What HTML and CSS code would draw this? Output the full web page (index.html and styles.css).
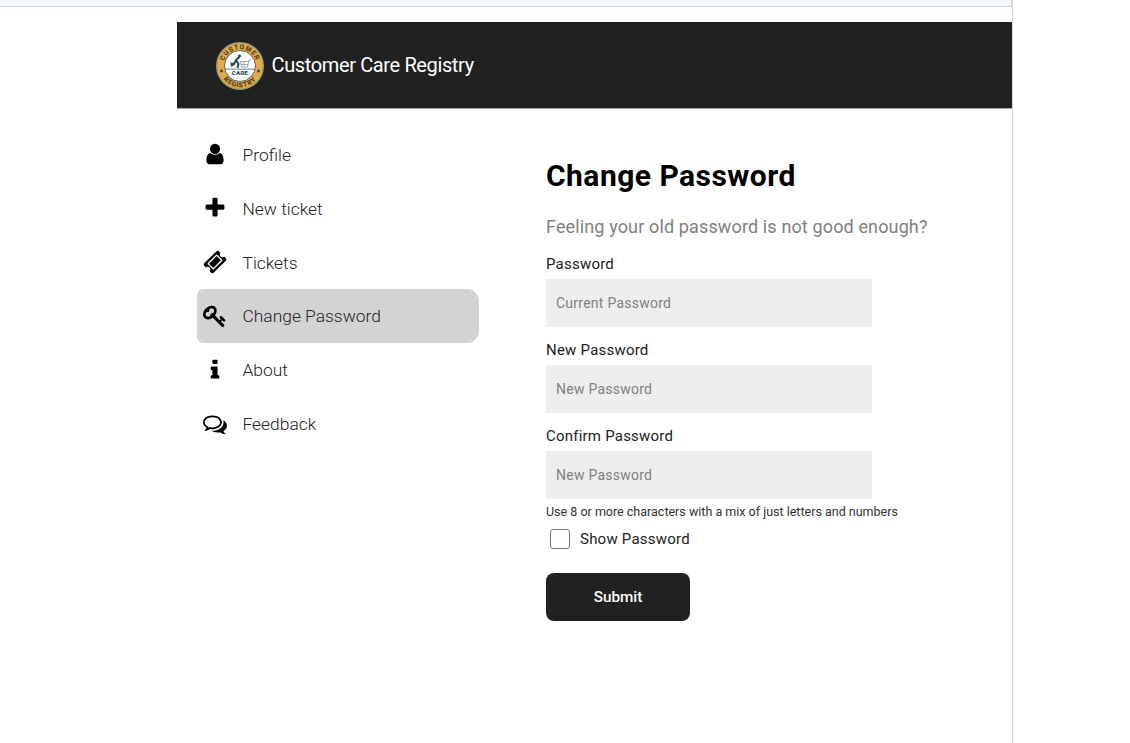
FILE: index.html
```html
<!DOCTYPE html>
<html lang="en">
<head>
<meta charset="utf-8">
<title>Customer Care Registry</title>
<link rel="stylesheet" href="styles.css">
</head>
<body>
<div class="frame">
  <div class="strip"></div>
  <div class="app">
    <header class="header">
      <svg class="logo" viewBox="0 0 48 48">
        <defs>
          <path id="arc-top" d="M7.300 24a16.700 16.700 0 0 1 33.400 0"/>
          <path id="arc-bottom" d="M2.700 24a21.300 21.300 0 0 0 42.600 0"/>
        </defs>
        <circle cx="24" cy="24" r="23.300" fill="#e5a948" stroke="#9c9c80" stroke-width="1.300"/>
        <circle cx="24" cy="24" r="15.500" fill="#fff" stroke="#566657" stroke-width="1"/>
        <text class="logo-ring"><textPath href="#arc-top" startOffset="50%" text-anchor="middle">CUSTOMER</textPath></text>
        <text class="logo-ring"><textPath href="#arc-bottom" startOffset="50%" text-anchor="middle">REGISTRY</textPath></text>
        <circle cx="5.500" cy="29" r="1.500" fill="#57431f"/>
        <circle cx="42.500" cy="29" r="1.500" fill="#57431f"/>
        <circle cx="23.500" cy="14" r="1.600" fill="#1f4d55"/>
        <path d="M23.500 15l-3.500 3-2 4-3 2M20 18l2.500 4-1 4M18.500 22l-4-.5" fill="none" stroke="#1f4d55" stroke-width="2"/>
        <path d="M35 18h-2l-1.500 7h-6l-1-5.500h8M25 22.500h7M28 20v5" fill="none" stroke="#8da0a5" stroke-width=".9"/>
        <path d="M9 27.200h30" stroke="#587278" stroke-width=".9"/>
        <text class="logo-care" x="24" y="33" text-anchor="middle">CARE</text>
        <path d="M17 36h14" stroke="#c5cccc" stroke-width="1" stroke-dasharray="2 1"/>
      </svg>
      <span class="brand">Customer Care Registry</span>
    </header>
    <div class="body">
      <nav class="menu">
        <a class="item"><svg class="icon" viewBox="0 0 1792 1792"><path d="M1536 1399q0 109-62.500 187t-150.500 78h-854q-88 0-150.500-78t-62.500-187q0-85 8.500-160.500t31.500-152 58.500-131 94-89 134.500-34.500q131 128 313 128t313-128q76 0 134.500 34.500t94 89 58.500 131 31.500 152 8.500 160.500zm-256-887q0 159-112.500 271.500t-271.500 112.500-271.500-112.500-112.500-271.500 112.500-271.500 271.500-112.500 271.500 112.500 112.500 271.500z"/></svg><span class="label">Profile</span></a>
        <a class="item"><svg class="icon" viewBox="0 0 1792 1792"><path d="M1600 736v192q0 40-28 68t-68 28h-416v416q0 40-28 68t-68 28h-192q-40 0-68-28t-28-68v-416h-416q-40 0-68-28t-28-68v-192q0-40 28-68t68-28h416v-416q0-40 28-68t68-28h192q40 0 68 28t28 68v416h416q40 0 68 28t28 68z"/></svg><span class="label">New ticket</span></a>
        <a class="item"><svg class="icon" viewBox="0 0 1792 1792"><path d="M1024 452l316 316-572 572-316-316zm-211 979l618-618q19-19 19-45t-19-45l-362-362q-18-18-45-18t-45 18l-618 618q-19 19-19 45t19 45l362 362q18 18 45 18t45-18zm889-637l-907 908q-37 37-90.500 37t-90.500-37l-126-126q56-56 56-136t-56-136-136-56-136 56l-125-126q-37-37-37-90.500t37-90.500l907-906q37-37 90.500-37t90.500 37l125 125q-56 56-56 136t56 136 136 56 136-56l126 125q37 37 37 90.500t-37 90.500z"/></svg><span class="label">Tickets</span></a>
        <a class="item active"><svg class="icon" viewBox="0 0 1792 1792"><path d="M832 512q0-80-56-136t-136-56-136 56-56 136q0 42 19 83-41-19-83-19-80 0-136 56t-56 136 56 136 136 56 136-56 56-136q0-42-19-83 41 19 83 19 80 0 136-56t56-136zm851 704q0 17-49 66t-66 49q-9 0-28.500-16t-36.500-33-38.500-40-24.500-26l-96 96 220 220q28 28 28 68 0 42-39 81t-81 39q-40 0-68-28l-671-671q-176 131-365 131-163 0-265.500-102.500t-102.500-265.500q0-160 95-313t248-248 313-95q163 0 265.500 102.500t102.500 265.500q0 189-131 365l355 355 96-96q-3-3-26-24.500t-40-38.500-33-36.500-16-28.500q0-17 49-66t66-49q13 0 23 10 6 6 46 44.500t82 79.500 86.500 86 73 78 28.500 41z"/></svg><span class="label">Change Password</span></a>
        <a class="item"><svg class="icon" viewBox="0 0 1792 1792"><path d="M1216 1344v128q0 26-19 45t-45 19h-512q-26 0-45-19t-19-45v-128q0-26 19-45t45-19h64v-384h-64q-26 0-45-19t-19-45v-128q0-26 19-45t45-19h384q26 0 45 19t19 45v576h64q26 0 45 19t19 45zm-128-1152v192q0 26-19 45t-45 19h-256q-26 0-45-19t-19-45v-192q0-26 19-45t45-19h256q26 0 45 19t19 45z"/></svg><span class="label">About</span></a>
        <a class="item"><svg class="icon" viewBox="0 0 1792 1792"><path d="M704 384q-153 0-286 52t-211.500 141-78.500 191q0 82 53 158t149 132l97 56-35 84q34-20 62-39l44-31 53 10q78 14 153 14 153 0 286-52t211.500-141 78.500-191-78.500-191-211.500-141-286-52zm0-128q191 0 353.500 68.500t256.500 186.500 94 257-94 257-256.500 186.500-353.500 68.500q-86 0-176-16-124 88-278 128-36 9-86 16h-3q-11 0-20.500-8t-11.500-21q-1-3-1-6.500t.5-6.500 2-6l2.500-5 3.500-5.500 4-5 4.500-5 4-4.500q5-6 23-25t26-29.500 22.500-29 25-38.500 20.500-44q-124-72-195-177t-71-224q0-139 94-257t256.500-186.500 353.500-68.500zm822 1169q10 24 20.500 44t25 38.500 22.500 29 26 29.500 23 25q1 1 4 4.500t4.500 5 4 5 3.500 5.500l2.500 5 2 6 .5 6.500-1 6.500q-3 14-13 22t-22 7q-50-7-86-16-154-40-278-128-90 16-176 16-271 0-472-132 58 4 88 4 161 0 309-45t264-129q125-92 192-212t67-254q0-77-23-152 129 71 204 178t75 230q0 120-71 224.500t-195 176.500z"/></svg><span class="label">Feedback</span></a>
      </nav>
      <form class="form">
        <h1 class="title">Change Password</h1>
        <p class="lead">Feeling your old password is not good enough?</p>
        <label class="field"><span class="name">Password</span><input class="input" type="password" placeholder="Current Password"></label>
        <label class="field"><span class="name">New Password</span><input class="input" type="password" placeholder="New Password"></label>
        <label class="field"><span class="name">Confirm Password</span><input class="input" type="password" placeholder="New Password"></label>
        <p class="hint">Use 8 or more characters with a mix of just letters and numbers</p>
        <label class="check"><input class="box" type="checkbox"><span>Show Password</span></label>
        <button class="submit" type="button">Submit</button>
      </form>
    </div>
  </div>
</div>
</body>
</html>
```

FILE: styles.css
```css
* { box-sizing: border-box; }
body { margin: 0; background: #fff; font-family: Roboto, "Liberation Sans", sans-serif; }
.frame { width: 1013px; height: 743px; border-right: 1px solid #d0d6df; overflow: hidden; }
.strip { height: 7px; background: #f6f8fb; border-bottom: 1px solid #cdd6de; border-right: 1px solid #cdd6de; }
.app { margin: 15px 0 0 177px; }
.header { height: 87px; padding: 1px 0 0 38.500px; display: flex; align-items: center; gap: 8px; background: #212121; border-bottom: 1px solid #aaa; }
.logo { width: 48px; height: 48px; }
.logo-ring { font: 900 6.800px Roboto, sans-serif; letter-spacing: .7px; fill: #57431f; }
.logo-care { font: 900 6.200px Roboto, sans-serif; fill: #1f4d55; letter-spacing: .2px; }
.brand { padding-bottom: 2px; font-size: 20px; line-height: 24px; color: #fff; letter-spacing: -.370px; }
.body { display: flex; gap: 67.500px; padding-left: 19.500px; }
.menu { width: 282px; padding-top: 18.800px; }
.item { height: 53.900px; padding-left: 6px; display: flex; align-items: center; gap: 16px; color: #222; font-size: 17.400px; font-weight: 300; line-height: 22px; }
.active { background: #d3d3d3; border-radius: 6px 12px 12px 6px; }
.icon { width: 24px; height: 24px; margin-top: -1px; fill: #000; }
.form { width: 400px; padding-top: 48px; }
.title { margin: 0; font-size: 30px; line-height: 38px; font-weight: 700; letter-spacing: .470px; color: #000; }
.lead { margin: 19px 0 0; font-size: 18px; line-height: 26px; letter-spacing: .135px; color: #808080; white-space: nowrap; }
.field { display: block; height: 86.200px; padding-top: 14px; }
.name { display: block; font-size: 15px; line-height: 20px; height: 25px; letter-spacing: .220px; color: #212121; }
.input { display: block; width: 325.500px; height: 48px; padding: 0 10px; border: 0; border-radius: 0; background: #eee; font: 14px Roboto, sans-serif; letter-spacing: .250px; }
.input::placeholder { color: #808080; }
.hint { margin: 4px 0 0; font-size: 12.500px; line-height: 18px; color: #333; white-space: nowrap; }
.check { display: flex; align-items: center; gap: 10px; height: 22px; margin-top: 7px; padding-left: 4px; font-size: 15px; line-height: 20px; letter-spacing: .220px; color: #212121; }
.box { appearance: none; width: 20px; height: 20px; margin: 0; border: 1px solid #767676; border-radius: 3px; background: #fff; }
.submit { display: block; width: 144px; height: 48px; margin-top: 23px; padding: 1px 0 0; border: 0; border-radius: 8px; background: #212121; color: #fff; font: 500 15.300px Roboto, sans-serif; }
```
